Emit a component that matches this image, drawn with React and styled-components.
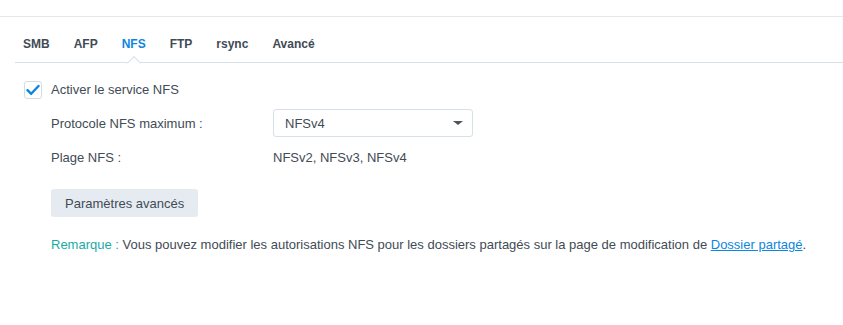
import React from 'react';
import styled, { createGlobalStyle } from 'styled-components';

const GlobalStyle = createGlobalStyle`
  body {
    margin: 0;
    background: #ffffff;
    font-family: "Liberation Sans", Arial, sans-serif;
    color: #414b55;
  }
`;

const Page = styled.div`
  width: 843px;
  height: 325px;
  padding-top: 16px;
  box-sizing: border-box;
`;

const TopRule = styled.div`
  height: 1px;
  background: #e3e8ee;
`;

const Body = styled.div`
  padding: 0 0 0 15px;
`;

const TabBar = styled.div`
  display: flex;
  gap: 24px;
  height: 46px;
  padding-left: 8px;
  border-bottom: 1px solid #d9e1e8;
  box-sizing: border-box;
`;

const Tab = styled.div`
  position: relative;
  font-size: 12px;
  font-weight: bold;
  color: ${p => (p.$active ? '#0c86df' : '#414b55')};
  display: flex;
  align-items: center;
  padding-top: 9px;
`;

const Notch = styled.span`
  position: absolute;
  left: 50%;
  bottom: -1px;
  width: 9px;
  height: 9px;
  background: #fff;
  border-left: 1px solid #d9e1e8;
  border-top: 1px solid #d9e1e8;
  transform: translate(-50%, 50%) rotate(45deg);
`;

const Content = styled.div`
  padding: 18px 0 0 9px;
`;

const CheckRow = styled.label`
  display: flex;
  align-items: center;
  gap: 9px;
  font-size: 13px;
  height: 17px;
`;

const Box = styled.span`
  width: 16px;
  height: 16px;
  border: 1px solid #d3dbe4;
  border-radius: 3px;
  display: flex;
  align-items: center;
  justify-content: center;
  background: #fff;
`;

const Form = styled.div`
  padding-left: 27px;
  margin-top: 8px;
  display: grid;
  grid-template-columns: 222px 200px;
  grid-auto-rows: 34px;
  align-items: center;
  font-size: 13px;
`;

const Select = styled.div`
  height: 28px;
  border: 1px solid #d7dfe7;
  border-radius: 3px;
  box-sizing: border-box;
  display: flex;
  align-items: center;
  justify-content: space-between;
  padding: 0 9px 0 11px;
`;

const Caret = styled.span`
  width: 0;
  height: 0;
  border-left: 5px solid transparent;
  border-right: 5px solid transparent;
  border-top: 4px solid #4b555f;
`;

const Actions = styled.div`
  padding-left: 27px;
  margin-top: 15px;
`;

const Button = styled.button`
  height: 28px;
  padding: 0 14px;
  border: none;
  border-radius: 3px;
  background: #e6ebf2;
  color: #414b55;
  font-family: inherit;
  font-size: 13px;
`;

const Note = styled.p`
  margin: 20px 0 0 27px;
  font-size: 13px;
`;

const NoteLabel = styled.span`
  color: #18aba4;
`;

const Link = styled.a`
  color: #0c86df;
  text-decoration: underline;
`;

const tabs = ['SMB', 'AFP', 'NFS', 'FTP', 'rsync', 'Avancé'];

export default function App() {
  return (
    <Page>
      <GlobalStyle />
      <TopRule />
      <Body>
        <TabBar>
          {tabs.map(t => (
            <Tab key={t} $active={t === 'NFS'}>
              {t}
              {t === 'NFS' && <Notch />}
            </Tab>
          ))}
        </TabBar>
        <Content>
          <CheckRow>
            <Box>
              <svg width="14" height="12" viewBox="0 0 14 12">
                <path d="M1.5 6.2 L5.2 9.8 L12.5 2" fill="none" stroke="#0c86df" strokeWidth="2.4" strokeLinecap="round" strokeLinejoin="round" />
              </svg>
            </Box>
            Activer le service NFS
          </CheckRow>
          <Form>
            <span>Protocole NFS maximum :</span>
            <Select>
              NFSv4
              <Caret />
            </Select>
            <span>Plage NFS :</span>
            <span>NFSv2, NFSv3, NFSv4</span>
          </Form>
          <Actions>
            <Button>Paramètres avancés</Button>
          </Actions>
          <Note>
            <NoteLabel>Remarque :</NoteLabel> Vous pouvez modifier les autorisations NFS pour les dossiers partagés sur la page de modification de <Link href="#">Dossier partagé</Link>.
          </Note>
        </Content>
      </Body>
    </Page>
  );
}
